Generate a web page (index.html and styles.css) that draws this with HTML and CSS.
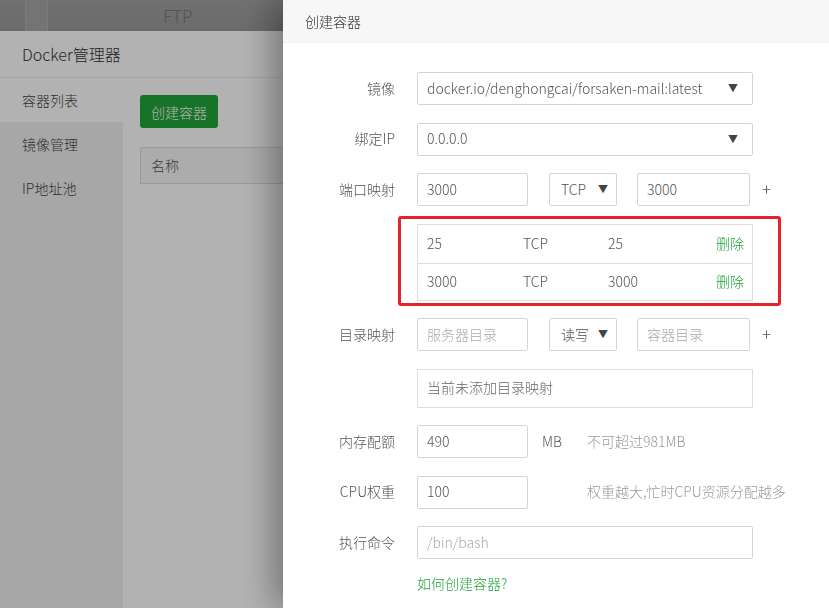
FILE: index.html
```html
<!DOCTYPE html>
<html lang="zh-CN">
<head>
<meta charset="utf-8">
<title>Docker管理器 - 创建容器</title>
<link rel="stylesheet" href="styles.css">
</head>
<body>
<div class="page">
  <div class="topbar">
    <div class="tab"></div>
    <span class="ftp">FTP</span>
  </div>
  <div class="panel">
    <div class="panel-head">Docker管理器</div>
    <div class="panel-body">
      <nav class="nav">
        <div class="nav-item active">容器列表</div>
        <div class="nav-item">镜像管理</div>
        <div class="nav-item">IP地址池</div>
      </nav>
      <div class="content">
        <button class="btn" type="button">创建容器</button>
        <div class="thead">名称</div>
      </div>
    </div>
  </div>
</div>
<div class="mask"></div>
<aside class="drawer">
  <div class="drawer-head">创建容器</div>
  <div class="form">
    <div class="row">
      <span class="label">镜像</span>
      <div class="field select w-full"><span>docker.io/denghongcai/forsaken-mail:latest</span><span class="arrow">▼</span></div>
    </div>
    <div class="row">
      <span class="label">绑定IP</span>
      <div class="field select w-full"><span>0.0.0.0</span><span class="arrow">▼</span></div>
    </div>
    <div class="row">
      <span class="label">端口映射</span>
      <input class="field w-s" value="3000">
      <div class="field select sel-sm"><span>TCP</span><span class="arrow">▼</span></div>
      <input class="field w-s2" value="3000">
      <span class="plus">+</span>
    </div>
    <div class="ports">
      <div class="port-row"><span>25</span><span>TCP</span><span>25</span><span class="del">删除</span></div>
      <div class="port-row"><span>3000</span><span>TCP</span><span>3000</span><span class="del">删除</span></div>
      <div class="highlight"></div>
    </div>
    <div class="row">
      <span class="label">目录映射</span>
      <input class="field w-s" placeholder="服务器目录">
      <div class="field select sel-sm"><span>读写</span><span class="arrow">▼</span></div>
      <input class="field w-s2" placeholder="容器目录">
      <span class="plus">+</span>
    </div>
    <div class="dirs">当前未添加目录映射</div>
    <div class="row">
      <span class="label">内存配额</span>
      <input class="field w-s" value="490">
      <span class="unit">MB</span>
      <span class="hint">不可超过981MB</span>
    </div>
    <div class="row">
      <span class="label">CPU权重</span>
      <input class="field w-s" value="100">
      <span class="unit"></span>
      <span class="hint">权重越大,忙时CPU资源分配越多</span>
    </div>
    <div class="row row-last">
      <span class="label">执行命令</span>
      <input class="field w-full" placeholder="/bin/bash">
    </div>
    <a class="help" href="#">如何创建容器?</a>
  </div>
</aside>
</body>
</html>
```
FILE: styles.css
```css
* { box-sizing: border-box; }
html, body { margin: 0; height: 100%; }
body {
  font-family: "Noto Sans CJK SC", "Noto Sans", sans-serif;
  font-size: 14px;
  font-weight: 300;
  color: #555;
  background: #fff;
  overflow: hidden;
}

/* background page */
.topbar {
  height: 31px;
  background: linear-gradient(#a2a2a2, #999);
  display: flex;
  align-items: center;
}
.tab {
  width: 23px;
  height: 31px;
  margin-left: 25px;
  border-left: 1px solid #b0b0b0;
  border-right: 1px solid #b0b0b0;
  background: #a6a6a6;
}
.ftp {
  margin-left: 115px;
  font-size: 17px;
  color: #777;
}
.panel-head {
  height: 47px;
  border-bottom: 1px solid #ececec;
  padding-left: 22px;
  display: flex;
  align-items: center;
  font-size: 16px;
  color: #333;
}
.panel-body { display: flex; }
.nav {
  width: 123px;
  height: 560px;
  background: #f0f0f0;
}
.nav-item {
  height: 44px;
  line-height: 44px;
  padding-left: 22px;
  color: #444;
}
.nav-item.active { background: #fff; }
.content { padding: 17px 0 0 17px; flex: 1; }
.btn {
  display: block;
  width: 78px;
  height: 33px;
  border: 0;
  border-radius: 3px;
  background: #20a53a;
  color: #fff;
  font: inherit;
  padding: 0;
}
.thead {
  margin-top: 19px;
  height: 37px;
  width: 300px;
  background: #f6f6f6;
  border: 1px solid #ddd;
  padding-left: 10px;
  line-height: 35px;
  color: #555;
}
.mask {
  position: fixed;
  inset: 0;
  background: rgba(0, 0, 0, 0.3);
}

/* drawer */
.drawer {
  position: fixed;
  top: 0;
  right: 0;
  bottom: 0;
  width: 546px;
  background: #fff;
  box-shadow: -10px 0 32px rgba(0, 0, 0, 0.35);
}
.drawer-head {
  height: 43px;
  background: #f7f7f7;
  border-bottom: 1px solid #eee;
  padding-left: 22px;
  line-height: 42px;
  color: #333;
}
.form { padding-top: 29px; }
.row {
  display: flex;
  align-items: center;
  margin-bottom: 17.5px;
}
.row-last { margin-bottom: 14px; }
.label {
  width: 134px;
  flex-shrink: 0;
  padding-right: 22px;
  padding-bottom: 2px;
  text-align: right;
  color: #555;
}
.field {
  height: 33px;
  border: 1px solid #d4d4d4;
  border-radius: 2px;
  padding: 0 9px 2px;
  font: inherit;
  color: #555;
  background: #fff;
  outline: none;
  display: flex;
  align-items: center;
}
.field::placeholder { color: #aaa; }
.select { justify-content: space-between; }
.arrow { font-size: 10px; color: #444; }
.w-full { width: 336px; padding-right: 14px; }
.w-s { width: 111px; }
.sel-sm { width: 68px; margin-left: 21px; padding: 0 8px 2px 11px; }
.w-s2 { width: 113px; margin-left: 20px; }
.plus { margin-left: 12px; font-size: 17px; color: #555; padding-bottom: 2px; }

.ports {
  position: relative;
  margin: 0 0 17.5px 134px;
  width: 336px;
  border: 1px solid #ddd;
}
.port-row {
  display: grid;
  grid-template-columns: 96px 85px 1fr auto;
  height: 38px;
  align-items: center;
  padding: 0 8px 2px 9px;
}
.port-row + .port-row { border-top: 1px solid #ddd; height: 37px; }
.del { color: #20a53a; }
.highlight {
  position: absolute;
  left: -20px;
  top: -9px;
  right: -29px;
  bottom: -6px;
  border: 3px solid #e4232e;
  border-radius: 3px;
}
.dirs {
  margin: 0 0 17.5px 134px;
  width: 336px;
  height: 39px;
  border: 1px solid #ddd;
  padding-left: 9px;
  line-height: 35px;
  color: #666;
}
.unit { width: 59px; padding-left: 14px; padding-bottom: 2px; color: #555; }
.hint { color: #999; padding-bottom: 2px; }
.help {
  display: block;
  margin-left: 134px;
  color: #20a53a;
  text-decoration: none;
}
```
